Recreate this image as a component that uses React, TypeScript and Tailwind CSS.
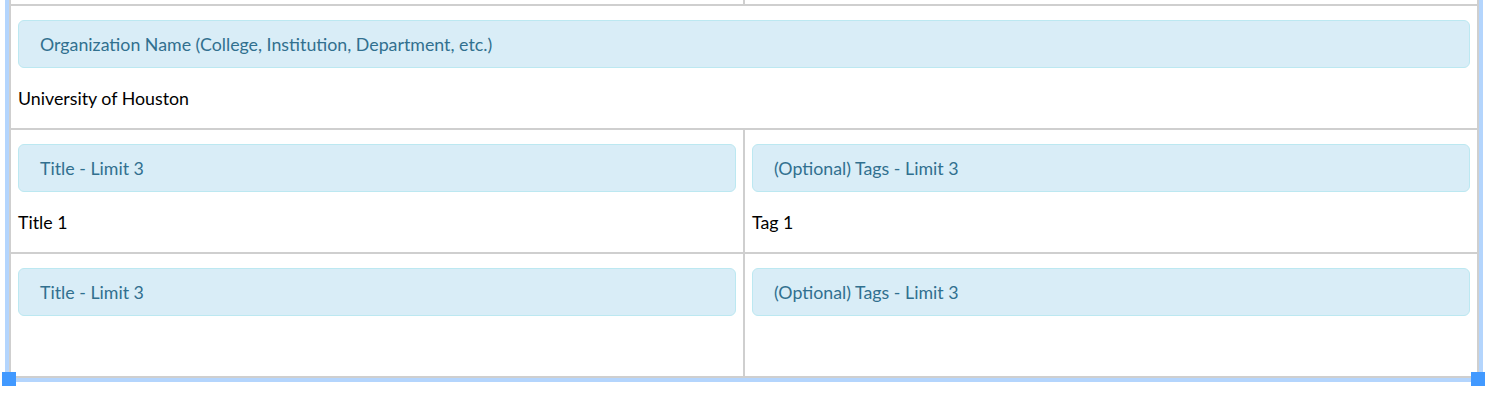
import React from 'react';

function Label({ text }: { text: string }) {
  return (
    <div className="h-[48px] flex items-center rounded-[6px] border border-[#bce8f1] bg-[#d9edf7] pl-[21px] text-[#31708f]">
      {text}
    </div>
  );
}

function Cell({ label, value, border }: { label: string; value?: string; border?: boolean }) {
  return (
    <div className={`px-[7px] pt-[14px] ${border ? 'border-r-2 border-[#cfcfcf]' : ''}`}>
      <Label text={label} />
      <div className="h-[60px] flex items-center">{value}</div>
    </div>
  );
}

export default function App() {
  return (
    <div
      className="w-[1492px] h-[414px] bg-white text-black text-[17.8px] leading-[1.4]"
      style={{ fontFamily: '"Source Sans Pro", "Lato", "Noto Sans", sans-serif' }}
    >
      <div className="relative ml-[5px] w-[1478px] border-x-4 border-b-4 border-[#b4d5fd]">
        <div className="border-x-2 border-b-2 border-[#cfcfcf]">
          <div className="grid grid-cols-[734px_1fr] h-[6px] border-b-2 border-[#cfcfcf]">
            <div className="border-r-2 border-[#cfcfcf]" />
            <div />
          </div>
          <div className="border-b-2 border-[#cfcfcf]">
            <Cell label="Organization Name (College, Institution, Department, etc.)" value="University of Houston" />
          </div>
          <div className="grid grid-cols-[734px_1fr] border-b-2 border-[#cfcfcf]">
            <Cell label="Title - Limit 3" value="Title 1" border />
            <Cell label="(Optional) Tags - Limit 3" value="Tag 1" />
          </div>
          <div className="grid grid-cols-[734px_1fr]">
            <Cell label="Title - Limit 3" border />
            <Cell label="(Optional) Tags - Limit 3" />
          </div>
        </div>
        <div className="absolute left-[-7px] bottom-[-8px] w-[14px] h-[14px] bg-[#4199ff]" />
        <div className="absolute right-[-6px] bottom-[-8px] w-[14px] h-[14px] bg-[#4199ff]" />
      </div>
    </div>
  );
}
